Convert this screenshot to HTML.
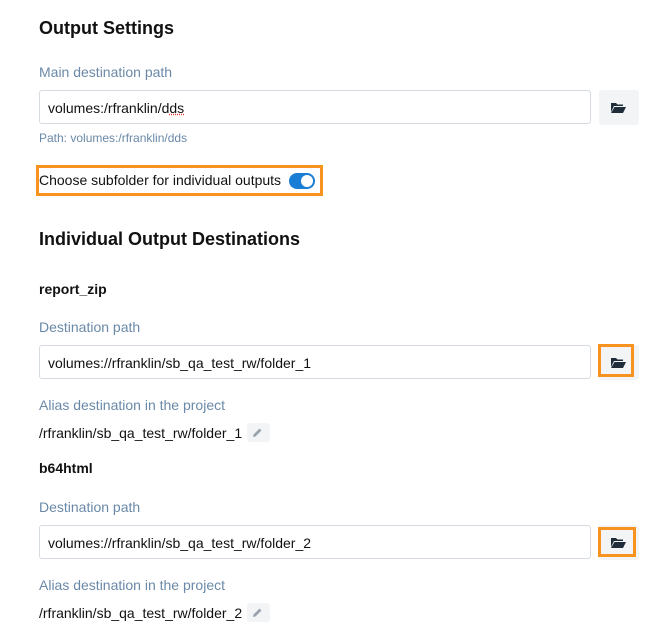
<!DOCTYPE html>
<html><head><meta charset="utf-8"><style>
*{box-sizing:border-box;margin:0;padding:0}
body{width:649px;height:642px;background:#fff;font-family:"Liberation Sans",Arial,sans-serif;color:#111;position:relative;overflow:hidden}
.a{position:absolute;white-space:nowrap}
h2{position:absolute;font-size:18px;font-weight:bold;left:39px}
.lbl{color:#6a89a8;font-size:14px;left:39px}
.inp{position:absolute;left:39px;width:552px;height:34px;border:1px solid #d5dbe1;border-radius:3px;font-size:14px;padding:9px 0 0 8px}
.btn{position:absolute;left:599px;width:40px;height:35px;background:#f2f4f6;border-radius:3px}
.btn svg{position:absolute;left:12px;top:12px}
.ob{position:absolute;border:3px solid #f7931e}
.pen{position:absolute;width:23px;height:19px;background:#f2f4f6;border-radius:3px}
.pen svg{position:absolute;left:5px;top:4px}
</style></head><body>
<h2 style="top:18px">Output Settings</h2>
<div class="a lbl" style="top:64px">Main destination path</div>
<div class="inp" style="top:90px">volumes:/rfranklin/d<span style="text-decoration:underline dotted #e33">ds</span></div>
<div class="btn" style="top:90px"><svg width="15" height="11" viewBox="0 0 15 11"><path d="M0 1h5l1.5 1.5H12V4H3L0 10Z M3.5 5H15L12 11H0Z" fill="#1f2d3a"/></svg></div>
<div class="a" style="left:39px;top:131px;font-size:12px;color:#6a89a8">Path: volumes:/rfranklin/dds</div>
<div class="ob" style="left:36px;top:165px;width:287px;height:31px"></div>
<div class="a" style="left:39px;top:172px;font-size:14px">Choose subfolder for individual outputs</div>
<div class="a" style="left:289px;top:173px;width:26px;height:16px;border-radius:8px;background:#1b7ed6"><div style="position:absolute;right:2px;top:2px;width:12px;height:12px;border-radius:50%;background:#fff"></div></div>
<h2 style="top:229px">Individual Output Destinations</h2>
<div class="a" style="left:39px;top:281px;font-size:14px;font-weight:bold">report_zip</div>
<div class="a lbl" style="top:319px">Destination path</div>
<div class="inp" style="top:345px">volumes://rfranklin/sb_qa_test_rw/folder_1</div>
<div class="btn" style="top:345px"><svg width="15" height="11" viewBox="0 0 15 11"><path d="M0 1h5l1.5 1.5H12V4H3L0 10Z M3.5 5H15L12 11H0Z" fill="#1f2d3a"/></svg></div>
<div class="ob" style="left:598px;top:344px;width:36px;height:33px"></div>
<div class="a lbl" style="top:397px">Alias destination in the project</div>
<div class="a" style="left:39px;top:425px;font-size:14px">/rfranklin/sb_qa_test_rw/folder_1</div>
<div class="pen" style="left:247px;top:423px"><svg width="11" height="11" viewBox="0 0 11 11"><path d="M1 10l0.5-2.5L7.5 1.5l2 2L3.5 9.5Z" fill="#9aa3ab"/></svg></div>
<div class="a" style="left:39px;top:460px;font-size:14px;font-weight:bold">b64html</div>
<div class="a lbl" style="top:499px">Destination path</div>
<div class="inp" style="top:525px">volumes://rfranklin/sb_qa_test_rw/folder_2</div>
<div class="btn" style="top:525px"><svg width="15" height="11" viewBox="0 0 15 11"><path d="M0 1h5l1.5 1.5H12V4H3L0 10Z M3.5 5H15L12 11H0Z" fill="#1f2d3a"/></svg></div>
<div class="ob" style="left:598px;top:527px;width:38px;height:30px"></div>
<div class="a lbl" style="top:577px">Alias destination in the project</div>
<div class="a" style="left:39px;top:605px;font-size:14px">/rfranklin/sb_qa_test_rw/folder_2</div>
<div class="pen" style="left:247px;top:603px"><svg width="11" height="11" viewBox="0 0 11 11"><path d="M1 10l0.5-2.5L7.5 1.5l2 2L3.5 9.5Z" fill="#9aa3ab"/></svg></div>
</body></html>
